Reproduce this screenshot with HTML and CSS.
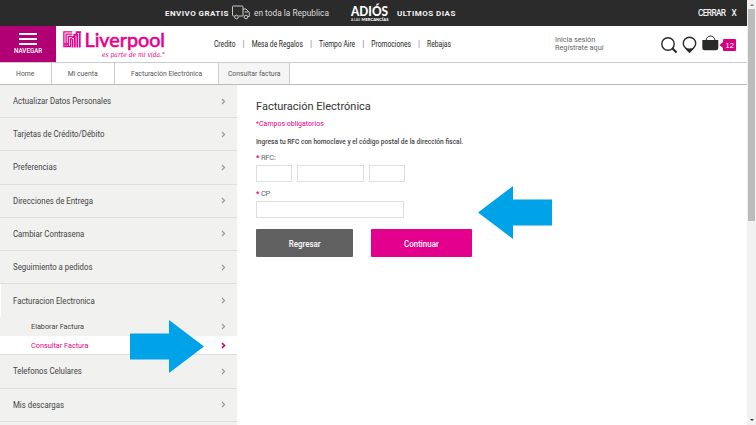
FILE: index.html
```html
<!DOCTYPE html>
<html lang="es">
<head>
<meta charset="utf-8">
<title>Facturación Electrónica</title>
<link rel="stylesheet" href="styles.css">
</head>
<body>
<div class="page">
  <header class="promo">
    <strong class="ship">ENVIVO GRATIS</strong>
    <svg class="truck" width="18" height="15" viewBox="0 0 18 15"><path d="M2.5 11H1.5Q.5 11 .5 10V2Q.5 1 1.5 1H10Q11 1 11 2V11H6.5M11 4H14L17.3 7.5V11.5H16M12.5 7H16.5"/><circle cx="4.5" cy="12" r="1.8"/><circle cx="14" cy="12" r="1.8"/></svg>
    <span class="country">en toda la Republica</span>
    <svg class="adios" width="38" height="18" viewBox="0 0 38 18"><text class="adios-big" x="0" y="12.2" textLength="37" lengthAdjust="spacingAndGlyphs">ADIÓS</text><text class="adios-small" x="0" y="16.8" textLength="9" lengthAdjust="spacingAndGlyphs">A LAS</text><text class="adios-small heavy" x="10.5" y="16.8" textLength="27" lengthAdjust="spacingAndGlyphs">MERCANCÍAS</text></svg>
    <strong class="days">ULTIMOS DIAS</strong>
    <span class="close">CERRAR<b>X</b></span>
  </header>
  <div class="masthead">
    <div class="burger"><i></i><i></i><i></i><span>NAVEGAR</span></div>
    <svg class="logo" width="106" height="28" viewBox="0 0 106 28">
      <path class="mark" d="M.9 16V.9H9.3M3.1 16V3.2H9.3M5.3 16V5.5H9.3M.3 15.5H7.5V8H9.3M.9 13H5"/>
      <path class="mark dense" d="M18 1H16.8V16.5M16.8 1.2H13.5V3.8H11.2V6.2H9M14.3 3V16.5M11.9 5.5V16.5M9.5 8V16.5M13.5 1V4"/>
      <text class="brand" x="21.5" y="15.5" textLength="80.5" lengthAdjust="spacingAndGlyphs">Liverpool</text>
      <text class="slogan" x="39" y="25.5" textLength="63" lengthAdjust="spacingAndGlyphs">es parte de mi vida.°</text>
    </svg>
    <nav class="links"><a>Credito</a><i>|</i><a>Mesa de Regalos</a><i>|</i><a>Tiempo Aire</a><i>|</i><a>Promociones</a><i>|</i><a>Rebajas</a></nav>
    <div class="account"><span>Inicia sesión</span><span>Regístrate aquí</span></div>
    <svg class="tools" width="77" height="20" viewBox="0 0 77 20">
      <circle class="line" cx="7" cy="9" r="6.2"/><path class="handle" d="M11.5 13.5l4 4"/>
      <path class="line" d="M28.5 17C25 13.5 22.3 12 22.3 8.5A6.2 6.2 0 0 1 34.7 8.5C34.7 12 32 13.5 28.5 17Z"/><path d="M23.5 12Q28.5 15 33.5 12L28.5 18Z"/>
      <path d="M41.3 5H57.3V13Q57.3 15.3 55 15.3H43.6Q41.3 15.3 41.3 13Z"/><path class="strap" d="M45 6C45-.7 54-.7 54 6"/>
      <path class="pink" d="M58.5 10l3.5-3V5Q62 4 63 4H74Q75 4 75 5V15Q75 16 74 16H63Q62 16 62 15V13Z"/>
      <text class="count" x="64.5" y="12.7">12</text>
    </svg>
  </div>
  <nav class="crumbs"><a class="c1"><span>Home</span></a><a class="c2"><span>Mi cuenta</span></a><a class="c3"><span>Facturación Electrónica</span></a><a class="c4"><span>Consultar factura</span></a></nav>
  <div class="content">
    <aside class="side">
      <a class="item"><span>Actualizar Datos Personales</span><svg width="5" height="7"><path d="M1 1l2.5 2.5L1 6"/></svg></a>
      <a class="item"><span>Tarjetas de Crédito/Débito</span><svg width="5" height="7"><path d="M1 1l2.5 2.5L1 6"/></svg></a>
      <a class="item"><span>Preferencias</span><svg width="5" height="7"><path d="M1 1l2.5 2.5L1 6"/></svg></a>
      <a class="item"><span>Direcciones de Entrega</span><svg width="5" height="7"><path d="M1 1l2.5 2.5L1 6"/></svg></a>
      <a class="item"><span>Cambiar Contrasena</span><svg width="5" height="7"><path d="M1 1l2.5 2.5L1 6"/></svg></a>
      <a class="item"><span>Seguimiento a pedidos</span><svg width="5" height="7"><path d="M1 1l2.5 2.5L1 6"/></svg></a>
      <a class="item open"><span>Facturacion Electronica</span><svg width="5" height="7"><path d="M1 1l2.5 2.5L1 6"/></svg></a>
      <a class="sub"><span>Elaborar Factura</span><svg width="5" height="7"><path d="M1 1l2.5 2.5L1 6"/></svg></a>
      <a class="sub current"><span>Consultar Factura</span><svg width="5" height="7"><path d="M1 1l2.5 2.5L1 6"/></svg></a>
      <a class="item"><span>Telefonos Celulares</span><svg width="5" height="7"><path d="M1 1l2.5 2.5L1 6"/></svg></a>
      <a class="item"><span>Mis descargas</span><svg width="5" height="7"><path d="M1 1l2.5 2.5L1 6"/></svg></a>
    </aside>
    <main class="form">
      <h1>Facturación Electrónica</h1>
      <p class="required">*Campos obligatorios</p>
      <p class="hint">Ingresa tu RFC con homoclave y el código postal de la dirección fiscal.</p>
      <label><b>*</b> RFC:</label>
      <div class="rfc"><input><input><input></div>
      <label><b>*</b> CP</label>
      <input class="cp">
      <div class="actions"><button class="back"><span>Regresar</span></button><button class="next"><span>Continuar</span></button></div>
    </main>
  </div>
</div>
<div class="scroll"><i class="up"></i><div class="thumb"></div><i class="down"></i></div>
<svg class="arrow arrow-right" width="74" height="53" viewBox="0 0 74 53"><path d="M0 13.5H39V0L74 26.5L39 53V39.5H0Z"/></svg>
<svg class="arrow arrow-left" width="74" height="53" viewBox="0 0 74 53"><path d="M74 13.5H35V0L0 26.5L35 53V39.5H74Z"/></svg>
</body>
</html>
```
FILE: styles.css
```css
* { box-sizing: border-box; }
body { margin: 0; width: 756px; height: 425px; overflow: hidden; display: flex; background: #fff; font-family: Roboto, sans-serif; color: #444; position: relative; }
.page { width: 747px; height: 425px; overflow: hidden; }
span, a, strong, p, h1, label { white-space: nowrap; }
svg { overflow: visible; }
.promo { height: 26px; background: #2b2b2b; display: flex; align-items: center; color: #f4f4f4; font-size: 8px; padding-left: 165px; }
.ship { width: 67px; letter-spacing: .45px; }
.truck { fill: none; stroke: #c9c9c9; stroke-width: 1; margin-top: -2px; }
.country { width: 97px; margin-left: 4px; letter-spacing: .02px; font-size: 8.3px; color: #ddd; }
.adios { fill: #fff; }
.adios-big { font: 900 13px Lato, sans-serif; }
.adios-small { font: 4px Lato, sans-serif; }
.heavy { font-weight: 900; }
.days { margin-left: 8px; letter-spacing: .45px; }
.close { margin-left: auto; margin-right: 11px; font-size: 8.3px; font-weight: 500; letter-spacing: -.65px; }
.close b { margin-left: 6px; font-weight: 500; }
.masthead { height: 36px; display: flex; }
.burger { width: 56px; height: 36px; background: #b00073; color: #fff; display: flex; flex-direction: column; align-items: center; gap: 3px; padding-top: 7px; }
.burger i { width: 18px; height: 2px; flex: none; background: #fff; }
.burger span { font-size: 8px; line-height: 8px; margin-top: -1px; font-weight: 500; transform: scaleX(.78); }
.logo { margin: 5px 0 0 7px; fill: #e6008a; }
.mark { fill: none; stroke: #e6008a; stroke-width: 1.3; }
.dense { stroke-width: 1.7; }
.brand { font: 400 20px Lato, sans-serif; stroke: #e6008a; stroke-width: .6; }
.slogan { font: italic 7px "DejaVu Serif", serif; }
.links { width: 300px; margin: 0 -63px 0 45px; transform: scaleX(.79); transform-origin: left; display: flex; justify-content: space-between; align-items: center; font-size: 8.5px; color: #222; }
.links i { font-style: normal; color: #854275; }
.account { margin: 10px 0 0 104px; width: 106px; display: flex; flex-direction: column; font-size: 7.3px; line-height: 8px; letter-spacing: -.02px; color: #666; }
.tools { margin-top: 9px; fill: #292929; }
.tools .line { fill: none; stroke: #292929; stroke-width: 1.4; }
.handle { stroke: #292929; stroke-width: 2.2; }
.strap { fill: none; stroke: #292929; stroke-width: 1; }
.tools .pink { fill: #d60080; }
.count { fill: #fff; font: 7.5px "Liberation Sans", sans-serif; }
.crumbs { height: 23px; border-top: 1px solid #ccc; border-bottom: 1px solid #bbb; display: flex; font-size: 7.6px; color: #555; }
.crumbs a { display: flex; align-items: center; justify-content: center; border-right: 1px solid #ccc; }
.crumbs span { transform: scaleX(.9); }
.c1 { width: 52px; }
.c2 { width: 63px; }
.c3 { width: 104px; }
.c4 { width: 71px; background: #f5f5f5; }
.content { display: flex; height: 340px; }
.side { width: 237px; background: #f1f1f0; }
.item { height: 33.2px; padding: 0 11px 0 13px; display: flex; align-items: center; justify-content: space-between; border-bottom: 1px solid #dedede; font-size: 8.8px; }
.item span { transform: scaleX(.89); transform-origin: left; }
.item.open { border-bottom: 0; border-left: 1px solid #fff; padding-left: 12px; }
.side svg { fill: none; stroke: #999; stroke-width: 1.2; }
.sub { height: 19px; padding: 0 11px 0 31px; display: flex; align-items: center; justify-content: space-between; font-size: 7.5px; }
.sub span { transform: scaleX(.97); transform-origin: left; }
.sub.current { background: #fff; color: #e6008a; border-bottom: 1px solid #dedede; padding-top: 1px; }
.side .current svg { stroke: #d60080; stroke-width: 1.7; }
.form { padding: 15px 0 0 19px; }
h1 { margin: 0; font-size: 11px; line-height: 13px; font-weight: 400; color: #333; }
p { margin: 0; }
.required { font-size: 7px; line-height: 9px; margin-top: 7px; color: #e6008a; }
.hint { font-size: 7.5px; line-height: 9px; margin-top: 8px; font-weight: 500; transform: scaleX(.88); transform-origin: left; width: 230px; }
label { display: block; font-size: 7.5px; line-height: 9px; margin-top: 7px; color: #666; letter-spacing: -.2px; }
label b { color: #d60080; }
input { display: block; border: 1px solid #ddd; background: #fff; height: 17px; padding: 0; }
.rfc { display: flex; gap: 5px; margin-top: 3px; }
.rfc input:nth-child(1) { width: 36px; }
.rfc input:nth-child(2) { width: 67px; }
.rfc input:nth-child(3) { width: 36px; }
.cp { width: 148px; margin-top: 3px; }
.actions { display: flex; gap: 18px; margin-top: 11px; }
button { border: 0; padding: 0; height: 28px; border-radius: 1px; color: #fff; font: 500 9.8px Roboto, sans-serif; }
button span { display: inline-block; transform: scaleX(.81); }
.back { width: 97px; background: #606060; }
.next { width: 101px; background: #e3008c; }
.scroll { width: 9px; background: #f1f1f1; display: flex; flex-direction: column; align-items: center; padding: 4px 0; }
.thumb { width: 7px; height: 212px; background: #bcbcbc; margin-top: 3px; }
.up { border: 2px solid transparent; border-top: 0; border-bottom-color: #777; }
.down { border: 2px solid transparent; border-bottom: 0; border-top-color: #333; margin-top: auto; }
.arrow { position: absolute; fill: #00a2e8; }
.arrow-right { left: 130px; top: 320px; }
.arrow-left { left: 478px; top: 186px; }
```
